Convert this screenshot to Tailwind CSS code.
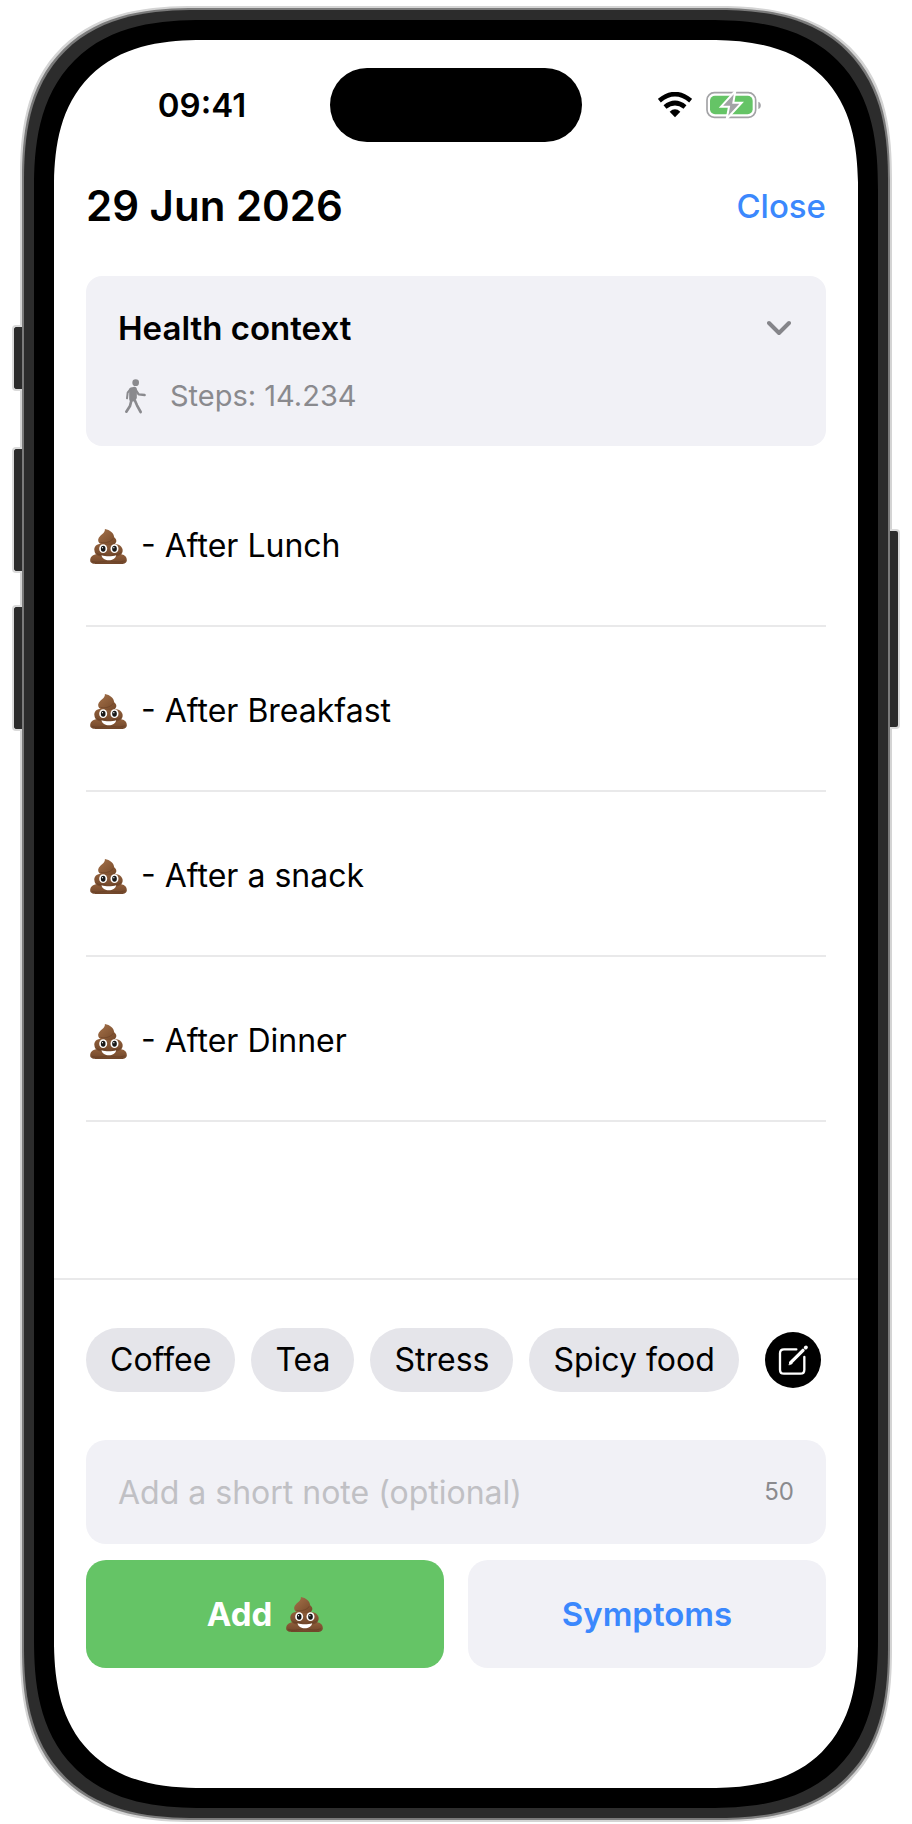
<!DOCTYPE html>
<html lang="en">
<head>
  <meta charset="UTF-8" />
  <meta name="viewport" content="width=device-width, initial-scale=1.0" />
  <title>29 Jun 2026</title>
  <script src="https://cdn.jsdelivr.net/npm/@tailwindcss/browser@4"></script>
</head>
<body class="bg-white text-black font-['Inter','Liberation_Sans',sans-serif]">

  <!-- shared icon -->
  <svg class="absolute w-0 h-0" aria-hidden="true">
    <defs>
      <linearGradient id="poopTop" x1="0" y1="0" x2="1" y2="1">
        <stop offset="0" stop-color="#a5724a" />
        <stop offset="1" stop-color="#734728" />
      </linearGradient>
      <linearGradient id="poopBody" x1="0" y1="0" x2="0" y2="1">
        <stop offset="0" stop-color="#8f5e3a" />
        <stop offset="1" stop-color="#70462a" />
      </linearGradient>
      <symbol id="poop" viewBox="0 0 110 105">
        <path fill="url(#poopBody)" d="M17 76C4 79 0 87 0 94c0 8 7 11 16 11h78c9 0 16-4 16-12 0-8-6-15-16-17z" />
        <path d="M6 97c18 6 34-1 48-1s32 7 50-1" fill="none" stroke="#55301a" stroke-width="2" opacity=".5" />
        <path fill="url(#poopBody)" d="M27 45c-12 3-16 12-14 20 0 5 3 9 6 12 8 9 62 10 73 0 6-5 7-13 4-19-3-7-9-11-16-12z" />
        <path fill="url(#poopTop)" d="M44 0c2 9-8 15-14 21-7 6-8 15-3 21 9 9 38 9 48 2 6-6 4-14-3-19C71 12 60 3 44 0z" />
        <path d="M31 40c14 4 33-2 38-12M20 74c8 4 20 3 28 2M67 77c10 1 20-1 26-7" fill="none" stroke="#55301a" stroke-width="2" opacity=".5" />
        <ellipse cx="39" cy="59" rx="12" ry="13" fill="#fff" />
        <ellipse cx="73" cy="59" rx="12" ry="13" fill="#fff" />
        <ellipse cx="39" cy="59" rx="7" ry="9" fill="#181818" />
        <ellipse cx="73" cy="59" rx="7" ry="9" fill="#181818" />
        <circle cx="37" cy="56" r="2" fill="#fff" />
        <circle cx="71" cy="56" r="2" fill="#fff" />
        <path fill="#fff" d="M34 79c12 4 32 4 44 0-2 10-11 15-22 15s-20-5-22-15z" />
      </symbol>
    </defs>
  </svg>

  <div class="relative min-h-screen flex pt-5 pb-4 px-[34px]">
    <!-- phone -->
    <div class="relative flex-1 min-w-0 flex flex-col bg-white border-[20px] border-black rounded-[170px] [corner-shape:superellipse(1.35)] shadow-[0_0_0_10px_#2c2c2c,0_0_0_12px_#7b7b7b,0_0_0_14px_#d4d4d4]">
      <div class="grid grid-cols-[1fr_252px_1fr] items-center pt-7">
        <div class="pl-5 text-center text-[33px] leading-10 font-semibold">09:41</div>
        <div class="h-[74px] rounded-full bg-black"></div>
        <div class="pr-5 flex items-center justify-center gap-[14px]">
          <svg class="w-[34px] h-[26px]" viewBox="0 0 102 78" fill="none" stroke="#000" stroke-width="14">
            <path d="M4 26Q51-13 98 26" />
            <path d="M21 45Q51 21 81 45" />
            <path d="M35 59Q51 45 67 59L51 76z" fill="#000" stroke="none" />
          </svg>
          <svg class="w-[56px] h-[28px]" viewBox="0 0 168 84">
            <rect x="3" y="5" width="146" height="74" rx="22" fill="none" stroke="#a3a3a6" stroke-width="5" />
            <rect x="12" y="14" width="128" height="56" rx="15" fill="#65c466" />
            <path d="M157 32c10 3 10 19 0 22z" fill="#a3a3a6" />
            <path d="M88 0 45 47h24L62 84l45-49H82z" fill="#a3a3a6" stroke="#fff" stroke-width="6" />
          </svg>
        </div>
      </div>

      <div class="flex items-center justify-between px-8 pt-[38px]">
        <h1 class="text-[42px] leading-[52px] font-semibold">29 Jun 2026</h1>
        <button class="text-[33px] leading-10 font-medium text-[#3b88fd]">Close</button>
      </div>

      <section class="mx-8 mt-11 px-8 pt-8 pb-[30px] rounded-2xl bg-[#f1f1f6]">
        <div class="flex items-center justify-between">
          <h2 class="text-[33px] leading-10 font-semibold">Health context</h2>
          <button aria-label="Expand health context" class="pr-[3px]">
            <svg class="w-6 h-4" viewBox="0 0 24 16" fill="none" stroke="#85858a" stroke-width="4" stroke-linecap="round" stroke-linejoin="round">
              <path d="M2 3l10 10L22 3" />
            </svg>
          </button>
        </div>
        <div class="flex items-center gap-[22px] pt-7 pl-[5px] text-[29px] leading-10 text-[#8a8a8e]">
          <svg class="w-[25px] h-[37px]" viewBox="0 0 75 111" fill="none" stroke="#8a8a8e" stroke-linecap="round" stroke-linejoin="round">
            <circle cx="38" cy="14" r="10" fill="#8a8a8e" stroke="none" />
            <path d="M27 36v26" stroke-width="17" />
            <path d="M34 34v24" stroke-width="15" />
            <path d="M21 35l-7 9-2 17" stroke-width="6" />
            <path d="M39 37l8 12 18 2" stroke-width="7" />
            <path d="M34 64l8 18 11 20" stroke-width="8" />
            <path d="M25 68l-4 16-11 17" stroke-width="8" />
          </svg>
          <span>Steps: 14.234</span>
        </div>
      </section>

      <ul class="flex-1 mx-8 mt-4 text-[32px] leading-10">
        <li class="flex items-center gap-[14px] pl-1 pt-16 pb-[59px] border-b-2 border-[#e9e9ea]">
          <svg class="w-[37px] h-[35px]" role="img" aria-label="Poop"><use href="#poop" /></svg>
          <span>- After Lunch</span>
        </li>
        <li class="flex items-center gap-[14px] pl-1 pt-16 pb-[59px] border-b-2 border-[#e9e9ea]">
          <svg class="w-[37px] h-[35px]" role="img" aria-label="Poop"><use href="#poop" /></svg>
          <span>- After Breakfast</span>
        </li>
        <li class="flex items-center gap-[14px] pl-1 pt-16 pb-[59px] border-b-2 border-[#e9e9ea]">
          <svg class="w-[37px] h-[35px]" role="img" aria-label="Poop"><use href="#poop" /></svg>
          <span>- After a snack</span>
        </li>
        <li class="flex items-center gap-[14px] pl-1 pt-16 pb-[59px] border-b-2 border-[#e9e9ea]">
          <svg class="w-[37px] h-[35px]" role="img" aria-label="Poop"><use href="#poop" /></svg>
          <span>- After Dinner</span>
        </li>
      </ul>

      <form class="border-t-2 border-[#e9e9ea] px-8 pt-12 pb-[120px]" onsubmit="return false">
        <div class="flex items-center gap-4 text-[32px] leading-10">
          <button type="button" class="h-16 px-6 rounded-full bg-[#e5e5ea]">Coffee</button>
          <button type="button" class="h-16 px-6 rounded-full bg-[#e5e5ea]">Tea</button>
          <button type="button" class="h-16 px-6 rounded-full bg-[#e5e5ea]">Stress</button>
          <button type="button" class="h-16 px-6 rounded-full bg-[#e5e5ea] whitespace-nowrap">Spicy food</button>
          <button type="button" aria-label="Edit tags" class="ml-auto mr-[5px] size-14 shrink-0 rounded-full bg-black">
            <svg class="size-14" viewBox="0 0 168 168" fill="none" stroke="#fff" stroke-width="7" stroke-linecap="round" stroke-linejoin="round">
              <path d="M94 52H57q-12 0-12 12v49q0 12 12 12h49q12 0 12-12V75" />
              <path d="M77 92l37-37" stroke-width="10" />
              <path d="M72 98l4-9 5 5z" fill="#fff" stroke-width="2" />
              <path d="M122 47l1-1" stroke-width="11" />
            </svg>
          </button>
        </div>

        <div class="mt-12 h-[104px] flex items-center px-8 rounded-[20px] bg-[#f1f1f6]">
          <input type="text" maxlength="50" aria-label="Note" placeholder="Add a short note (optional)" class="flex-1 min-w-0 pt-0.5 text-[32px] leading-10 outline-none placeholder:text-[#c0c0c4]" />
          <span class="text-2xl text-[#8a8a8e]">50</span>
        </div>

        <div class="mt-4 grid grid-cols-2 gap-6 text-[33px] leading-10">
          <button type="submit" class="h-[108px] flex items-center justify-center gap-[14px] rounded-[20px] bg-[#65c466] text-white font-bold">
            Add
            <svg class="w-[37px] h-[35px]" role="img" aria-label="Poop"><use href="#poop" /></svg>
          </button>
          <button type="button" class="h-[108px] rounded-[20px] bg-[#f1f1f6] text-[#3b88fd] font-semibold">Symptoms</button>
        </div>
      </form>
    </div>

    <!-- side keys -->
    <div class="absolute left-3 top-[325px] w-[10px] h-[66px] rounded-l bg-[#2c2c2c] border-2 border-r-0 border-[#dadada]"></div>
    <div class="absolute left-3 top-[447px] w-[10px] h-[126px] rounded-l bg-[#2c2c2c] border-2 border-r-0 border-[#dadada]"></div>
    <div class="absolute left-3 top-[605px] w-[10px] h-[126px] rounded-l bg-[#2c2c2c] border-2 border-r-0 border-[#dadada]"></div>
    <div class="absolute right-3 top-[529px] w-[10px] h-[200px] rounded-r bg-[#2c2c2c] border-2 border-l-0 border-[#dadada]"></div>
  </div>
</body>
</html>
